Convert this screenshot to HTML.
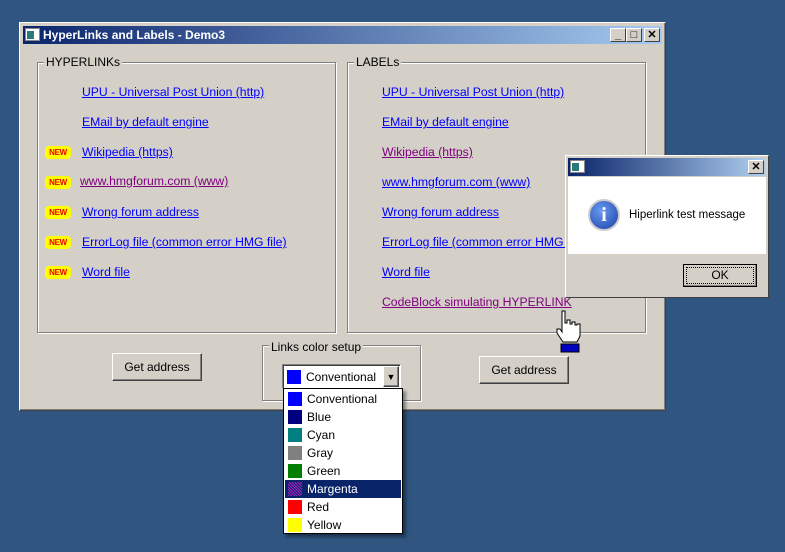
<!DOCTYPE html>
<html><head><style>
*{margin:0;padding:0;box-sizing:border-box}
body{width:785px;height:552px;background:#2f5580;font-family:"Liberation Sans",sans-serif;font-size:12px;position:relative;overflow:hidden}
.abs{position:absolute}
.win{left:19px;top:22px;width:647px;height:389px;background:#d4d0c8;border:1px solid;border-color:#fff #404040 #404040 #fff;box-shadow:inset -1px -1px #808080,inset 1px 1px #d4d0c8}
.title{left:3px;top:3px;right:3px;height:18px;background:linear-gradient(90deg,#0a246a,#a6caf0);color:#fff;font-weight:bold;font-size:12px;line-height:18px;padding-left:20px}
.ticon{left:2px;top:2px;width:15px;height:13px;background:#fff;border:1px solid #888}
.ticon i{position:absolute;left:1px;top:2px;width:7px;height:8px;background:#2a7a7a}
.tb{top:2px;width:16px;height:14px;background:#d4d0c8;border:1px solid;border-color:#fff #404040 #404040 #fff;color:#000;font-size:11px;line-height:12px;text-align:center;font-weight:bold}
.grp{border:1px solid #808080;box-shadow:1px 1px #fff,inset 1px 1px #fff}
.glbl{background:#d4d0c8;padding:0 2px;font-size:12px;color:#000}
a{color:#0000ff;text-decoration:underline;font-size:12.2px;position:absolute;white-space:nowrap}
.new{position:absolute;width:24px;height:11px;background:#ff0;color:#e00;font-size:8px;font-weight:bold;line-height:11px;text-align:center;border-radius:3px;box-shadow:0 0 0 1px #ff0;letter-spacing:-.3px}
.btn{background:#d4d0c8;border:1px solid;border-color:#fff #404040 #404040 #fff;box-shadow:inset -1px -1px #808080;text-align:center;line-height:26px;font-size:12px}
.item{position:absolute;left:1px;width:116px;height:18px;line-height:18px;font-size:12px;padding-left:22px}
.item i{position:absolute;left:3px;top:2px;width:14px;height:14px}
</style></head><body>
<div class="abs win">
 <div class="abs title" style="background:linear-gradient(90deg,#0a246a,#a6caf0)"><div class="abs ticon"><i></i></div>HyperLinks and Labels - Demo3
  <div class="abs tb" style="right:36px">_</div><div class="abs tb" style="right:20px">□</div><div class="abs tb" style="right:2px">✕</div>
 </div>
</div>
<div class="abs grp" style="left:37px;top:62px;width:299px;height:271px"></div>
<div class="abs glbl" style="left:44px;top:55px">HYPERLINKs</div>
<div class="abs grp" style="left:347px;top:62px;width:299px;height:271px"></div>
<div class="abs glbl" style="left:354px;top:55px">LABELs</div>

<a style="left:82px;top:85px">UPU - Universal Post Union (http)</a>
<a style="left:82px;top:115px">EMail by default engine</a>
<a style="left:82px;top:145px">Wikipedia (https)</a>
<a style="left:80px;top:174px;color:#800080">www.hmgforum.com (www)</a>
<a style="left:82px;top:205px">Wrong forum address</a>
<a style="left:82px;top:235px">ErrorLog file (common error HMG file)</a>
<a style="left:82px;top:265px">Word file</a>
<div class="new" style="left:46px;top:147px">NEW</div>
<div class="new" style="left:46px;top:177px">NEW</div>
<div class="new" style="left:46px;top:207px">NEW</div>
<div class="new" style="left:46px;top:237px">NEW</div>
<div class="new" style="left:46px;top:267px">NEW</div>

<a style="left:382px;top:85px">UPU - Universal Post Union (http)</a>
<a style="left:382px;top:115px">EMail by default engine</a>
<a style="left:382px;top:145px;color:#800080">Wikipedia (https)</a>
<a style="left:382px;top:175px">www.hmgforum.com (www)</a>
<a style="left:382px;top:205px">Wrong forum address</a>
<a style="left:382px;top:235px">ErrorLog file (common error HMG file)</a>
<a style="left:382px;top:265px">Word file</a>
<a style="left:382px;top:295px;color:#800080">CodeBlock simulating HYPERLINK</a>

<div class="abs btn" style="left:112px;top:353px;width:90px;height:28px">Get address</div>
<div class="abs btn" style="left:479px;top:356px;width:90px;height:28px">Get address</div>

<div class="abs grp" style="left:262px;top:345px;width:159px;height:56px"></div>
<div class="abs glbl" style="left:269px;top:340px">Links color setup</div>
<div class="abs" style="left:282px;top:364px;width:119px;height:25px;background:#fff;border:1px solid;border-color:#808080 #fff #fff #808080;box-shadow:inset 1px 1px #404040">
 <div class="abs" style="left:4px;top:5px;width:14px;height:14px;background:#00f"></div>
 <div class="abs" style="left:23px;top:5px;font-size:12px">Conventional</div>
 <div class="abs btn" style="right:1px;top:1px;width:16px;height:21px;line-height:20px;font-size:9px">▼</div>
</div>
<div class="abs" style="left:283px;top:388px;width:120px;height:146px;background:#fff;border:1px solid #000;box-shadow:3px 3px 3px rgba(0,0,0,.4)">
 <div class="item" style="top:1px"><i style="background:#00f"></i>Conventional</div>
 <div class="item" style="top:19px"><i style="background:#000080"></i>Blue</div>
 <div class="item" style="top:37px"><i style="background:#008080"></i>Cyan</div>
 <div class="item" style="top:55px"><i style="background:#808080"></i>Gray</div>
 <div class="item" style="top:73px"><i style="background:#008000"></i>Green</div>
 <div class="item" style="top:91px;background:#0a246a;color:#fff"><i style="background:repeating-linear-gradient(45deg,#a020c0 0 1px,#0a246a 1px 2px)"></i>Margenta</div>
 <div class="item" style="top:109px"><i style="background:#f00"></i>Red</div>
 <div class="item" style="top:127px"><i style="background:#ff0"></i>Yellow</div>
</div>

<div class="abs" style="left:565px;top:155px;width:204px;height:143px;background:#d4d0c8;border:1px solid;border-color:#fff #404040 #404040 #fff">
 <div class="abs title" style="left:2px;top:2px;right:2px;height:18px;background:linear-gradient(90deg,#0a246a,#b0d0f0)"><div class="abs ticon"><i></i></div>
  <div class="abs tb" style="right:2px">✕</div></div>
 <div class="abs" style="left:2px;top:21px;right:2px;height:77px;background:#fff">
  <div class="abs" style="left:20px;top:22px;width:32px;height:32px;border-radius:50%;background:radial-gradient(circle at 40% 35%,#6a9af0,#1a3fa8);border:2px solid #ccc;color:#fff;font-weight:bold;font-size:20px;text-align:center;line-height:28px;font-family:'Liberation Serif',serif">i</div>
  <div class="abs" style="left:61px;top:32px;font-size:11.5px">Hiperlink test message</div>
 </div>
 <div class="abs btn" style="left:117px;top:108px;width:74px;height:23px;line-height:21px;border:1px solid #000;outline:1px dotted #000;outline-offset:-4px">OK</div>
</div>

<svg class="abs" style="left:555px;top:310px" width="26" height="44" viewBox="0 0 26 44">
 <path d="M7 1h3v12h2v-3h3v4h2v-2h3v3h2v-1h3v12l-3 6H8l-6-9v-4h3l2 3z" fill="#fff" stroke="#000" stroke-width="1"/>
 <rect x="6" y="34" width="18" height="8" fill="#0000c0" stroke="#000"/>
</svg>
</body></html>
